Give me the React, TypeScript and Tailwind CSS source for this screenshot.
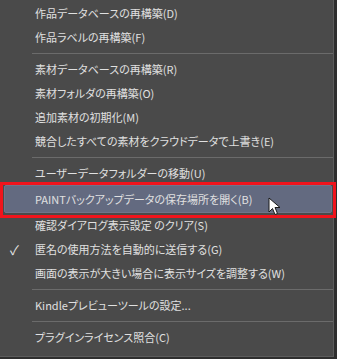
import React from 'react';

type Entry = { label: string; checked?: boolean; active?: boolean } | 'sep';

const entries: Entry[] = [
  { label: '作品データベースの再構築(D)' },
  { label: '作品ラベルの再構築(F)' },
  'sep',
  { label: '素材データベースの再構築(R)' },
  { label: '素材フォルダの再構築(O)' },
  { label: '追加素材の初期化(M)' },
  { label: '競合したすべての素材をクラウドデータで上書き(E)' },
  'sep',
  { label: 'ユーザーデータフォルダーの移動(U)' },
  { label: 'PAINTバックアップデータの保存場所を開く(B)', active: true },
  { label: '確認ダイアログ表示設定 のクリア(S)' },
  { label: '匿名の使用方法を自動的に送信する(G)', checked: true },
  { label: '画面の表示が大きい場合に表示サイズを調整する(W)' },
  'sep',
  { label: 'Kindleプレビューツールの設定...' },
  'sep',
  { label: 'プラグインライセンス照合(C)' },
];

const Cursor = () => (
  <svg width="14" height="20" viewBox="0 0 14 20" className="absolute left-[268px] top-[12px]">
    <path d="M1 1 L1 15 L4.5 11.5 L7 17.5 L9.5 16.5 L7 10.5 L12 10.5 Z" fill="#ffffff" stroke="#1a1a1a" strokeWidth="1" strokeLinejoin="round" />
  </svg>
);

function MenuRow({ label, checked, active }: { label: string; checked?: boolean; active?: boolean }) {
  return (
    <div className={`relative flex items-center ${active ? 'h-[28px]' : 'h-6'}`}>
      {active && (
        <>
          <div className="absolute inset-y-0 left-[4px] right-[1px] bg-[#636a80] rounded-[2px] border border-[#6f758a]" />
          <div className="absolute -top-[3px] -bottom-[5px] left-0 -right-[3px] border-[3px] border-[#f0141c]" />
          <Cursor />
        </>
      )}
      <span className="relative w-[35px] shrink-0 pl-[10px] text-[13px] text-[#e6e6e6]">{checked ? '✓' : ''}</span>
      <span className="relative whitespace-nowrap">{label}</span>
    </div>
  );
}

export default function App() {
  return (
    <div className="w-[337px] h-[359px] bg-[#2e2e2e] overflow-hidden">
      <div
        className="w-[334px] h-[357px] bg-[#4a4a4a] border-r border-b border-[#5c5c5c] pt-px text-[11px] text-[#e0e0e0] [font-feature-settings:'palt'] leading-none"
        style={{ fontFamily: '"Segoe UI", "Noto Sans CJK JP", "Noto Sans", sans-serif' }}
      >
        {entries.map((e, i) =>
          e === 'sep' ? (
            <div key={i} className="h-[8px] flex items-center pl-[32px]">
              <div className="h-px w-full bg-[#6b6b6b]" />
            </div>
          ) : (
            <MenuRow key={i} {...e} />
          )
        )}
      </div>
    </div>
  );
}
